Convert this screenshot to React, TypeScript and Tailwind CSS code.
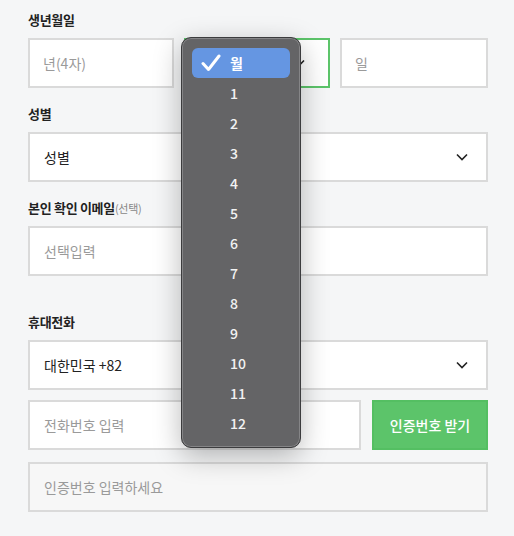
import React from "react";

const font = { fontFamily: '"Noto Sans CJK KR", "Noto Sans", sans-serif' };

function Chevron({ className = "" }: { className?: string }) {
  return (
    <svg width="12" height="8" viewBox="0 0 12 8" className={className}>
      <path d="M1 1.5 L6 6.5 L11 1.5" fill="none" stroke="#222" strokeWidth="1.6" />
    </svg>
  );
}

function Label({ children }: { children: React.ReactNode }) {
  return (
    <div className="h-[18px] leading-[18px] text-[13px] font-bold text-[#222] mb-[9px] tracking-[-0.3px]">
      {children}
    </div>
  );
}

export default function App() {
  const months = ["1", "2", "3", "4", "5", "6", "7", "8", "9", "10", "11", "12"];
  return (
    <div style={font} className="relative w-[514px] h-[536px] bg-[#f5f6f7] overflow-hidden">
      <div className="pt-[11px] ml-[28px] w-[460px]">
        <Label>생년월일</Label>
        <div className="grid grid-cols-[146px_146px_148px] gap-[10px]">
          <div className="h-[50px] border-2 border-[#dadada] bg-white flex items-center px-[13px] text-[14px] text-[#9a9a9a]">
            년(4자)
          </div>
          <div className="h-[50px] border-2 border-[#5cc46a] bg-white flex items-center justify-end pr-[23px]">
            <Chevron />
          </div>
          <div className="h-[50px] border-2 border-[#dadada] bg-white flex items-center px-[13px] text-[14px] text-[#9a9a9a]">
            일
          </div>
        </div>

        <div className="mt-[17px]">
          <Label>성별</Label>
          <div className="h-[50px] border-2 border-[#dadada] bg-white flex items-center justify-between px-[14px] pr-[18px] text-[14px] text-[#222]">
            <span>성별</span>
            <Chevron />
          </div>
        </div>

        <div className="mt-[17px]">
          <Label>
            본인 확인 이메일<span className="font-normal text-[11px] text-[#888]">(선택)</span>
          </Label>
          <div className="h-[50px] border-2 border-[#dadada] bg-white flex items-center px-[14px] text-[14px] text-[#9a9a9a]">
            선택입력
          </div>
        </div>

        <div className="mt-[37px]">
          <Label>휴대전화</Label>
          <div className="h-[50px] border-2 border-[#dadada] bg-white flex items-center justify-between px-[14px] pr-[18px] text-[14px] text-[#222]">
            <span>대한민국 +82</span>
            <Chevron />
          </div>
          <div className="flex gap-[11px] mt-[10px]">
            <div className="flex-1 h-[50px] border-2 border-[#dadada] bg-white flex items-center px-[14px] text-[14px] text-[#9a9a9a]">
              전화번호 입력
            </div>
            <button className="w-[116px] h-[50px] bg-[#5cc46a] border-2 border-[#54bf62] text-white text-[14px] font-medium">
              인증번호 받기
            </button>
          </div>
          <div className="mt-[12px] h-[50px] border-2 border-[#dadada] bg-[#f7f7f7] flex items-center px-[14px] text-[14px] text-[#9a9a9a]">
            인증번호 입력하세요
          </div>
        </div>
      </div>

      <div className="absolute left-[181px] top-[37px] w-[120px] h-[411px] rounded-[10px] bg-[#646466] border border-[#3c3c3e] shadow-[0_8px_28px_rgba(0,0,0,0.28),inset_0_0_0_1px_#858587] p-[10px]">
        <div className="h-[30px] rounded-[6px] bg-[#6596e2] flex items-center relative text-white text-[14px] font-bold">
          <svg width="20" height="18" viewBox="0 0 20 18" className="absolute left-[9px] top-[6px]">
            <path d="M2 9.5 L7.5 15.5 L18 2" fill="none" stroke="#fff" strokeWidth="3" strokeLinecap="round" strokeLinejoin="round" />
          </svg>
          <span className="pl-[38px]">월</span>
        </div>
        {months.map((m) => (
          <div key={m} className="h-[30px] flex items-center pl-[38px] text-[14px] font-medium text-[#f2f2f2]">
            {m}
          </div>
        ))}
      </div>
    </div>
  );
}
